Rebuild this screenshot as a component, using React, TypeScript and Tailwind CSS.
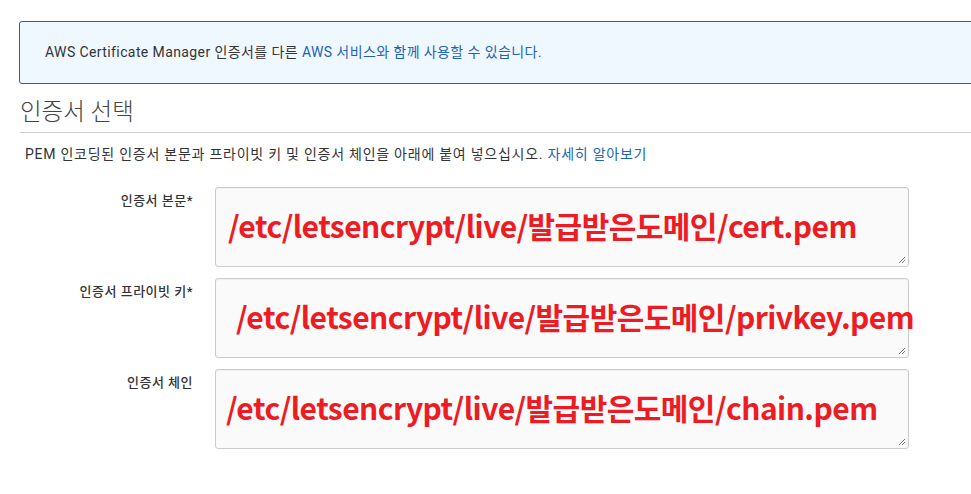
import { ReactNode } from "react";

const kr = "font-['Roboto','Noto_Sans_CJK_KR',sans-serif]";

type FieldProps = {
  label: string;
  value: string;
  offset: string;
  mt: string;
};

const Field = ({ label, value, offset, mt }: FieldProps) => {
  return (
    <div className={`flex ${mt}`}>
      <div className="w-[194px] shrink-0 pt-[4px] pr-[1px] text-right text-[13px] font-medium tracking-[0.5px] text-[#333]">{label}</div>
      <div className="relative ml-[21px] h-[80px] w-[694px] rounded-[3px] border border-[#ccc] bg-[#fafafa] shadow-[inset_0_1px_1px_rgba(0,0,0,0.05)]">
        <span
          className={`absolute top-[15px] ${offset} whitespace-nowrap font-['Noto_Sans_CJK_KR',sans-serif] text-[30px] font-bold tracking-[-0.55px] text-[#ed1c24]`}
        >
          {value}
        </span>
        <svg className="absolute bottom-[2px] right-[2px]" width="9" height="9" viewBox="0 0 9 9">
          <path d="M8 2 L2 8 M8 5 L5 8" stroke="#777" strokeWidth="1" />
        </svg>
      </div>
    </div>
  );
};

const Link = ({ children }: { children: ReactNode }) => <span className="text-[#1d63b8]">{children}</span>;

export default function App() {
  return (
    <div className={`min-h-[494px] w-[971px] overflow-hidden bg-white ${kr}`}>
      <div className="pl-[19px] pt-[21px]">
        <div className="flex h-[63px] w-[980px] items-center rounded-[3px] border border-[#1f63ad] bg-[#f0f8ff] pl-[25px] text-[14px] tracking-[0.4px] text-[#333]">
          <span>
            AWS Certificate Manager 인증서를 다른 <Link>AWS 서비스와 함께 사용할 수 있습니다.</Link>
          </span>
        </div>
      </div>
      <div className="ml-[20px] mt-[13px] border-b border-[#ccc] pb-[5px] text-[23.5px] font-light leading-[30px] text-[#444]">
        인증서 선택
      </div>
      <div className="ml-[25px] mt-[11px] text-[14px] tracking-[0.75px] text-[#333]">
        PEM 인코딩된 인증서 본문과 프라이빗 키 및 인증서 체인을 아래에 붙여 넣으십시오. <Link>자세히 알아보기</Link>
      </div>
      <Field label="인증서 본문*" value="/etc/letsencrypt/live/발급받은도메인/cert.pem" offset="left-[12px]" mt="mt-[22px]" />
      <Field label="인증서 프라이빗 키*" value="/etc/letsencrypt/live/발급받은도메인/privkey.pem" offset="left-[20px]" mt="mt-[11px]" />
      <Field label="인증서 체인" value="/etc/letsencrypt/live/발급받은도메인/chain.pem" offset="left-[10px]" mt="mt-[11px]" />
    </div>
  );
}
